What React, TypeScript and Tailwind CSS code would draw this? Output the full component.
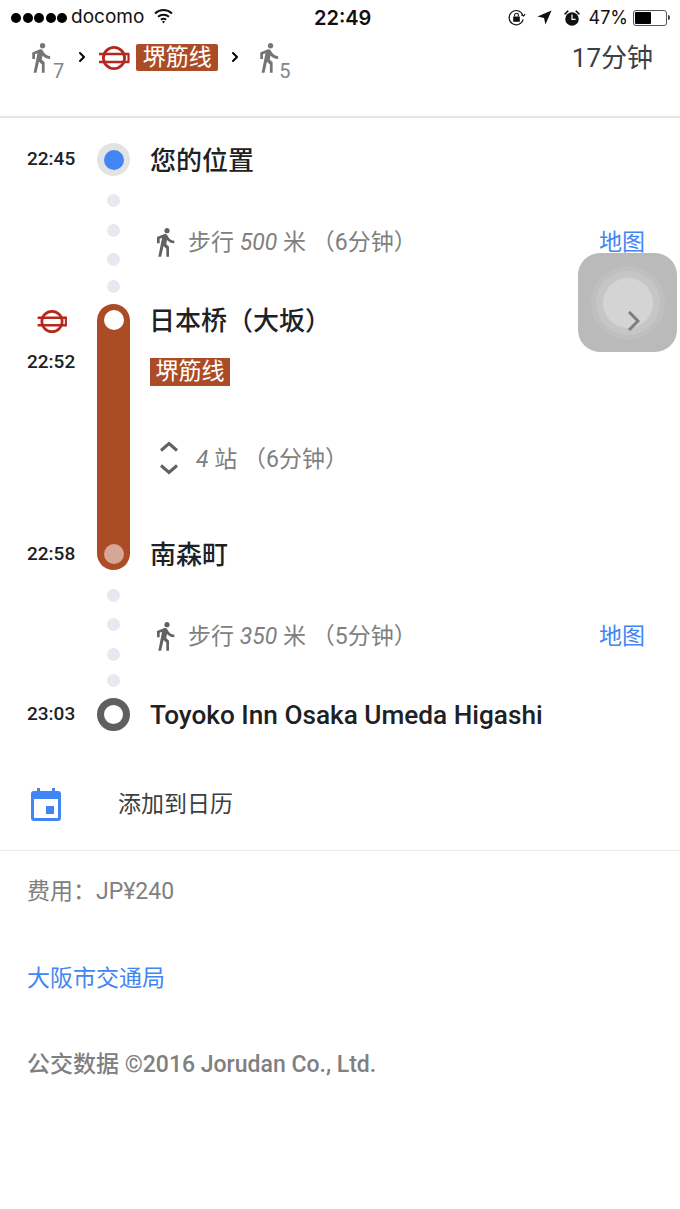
import React from "react";
import { ChevronRight } from "lucide-react";

const ROBOTO = "font-['Roboto','Noto_Sans_CJK_SC',sans-serif]";

function WalkIcon({ className }: { className: string }) {
  return (
    <svg viewBox="0 0 24 24" className={className} fill="currentColor">
      <path d="M13.5 5.5c1.1 0 2-.9 2-2s-.9-2-2-2-2 .9-2 2 .9 2 2 2zM9.8 8.9L7 23h2.1l1.8-8 2.1 2v6h2v-7.5l-2.1-2 .6-3C14.8 12 16.8 13 19 13v-2c-1.9 0-3.5-1-4.3-2.4l-1-1.6c-.4-.6-1-1-1.7-1-.3 0-.5.1-.8.1L6 8.3V13h2V9.6l1.8-.7" />
    </svg>
  );
}

function MetroIcon({ className }: { className: string }) {
  return (
    <svg viewBox="0 0 32 24" className={className} fill="none" stroke="#b5291c">
      <circle cx="16" cy="12" r="10.6" strokeWidth="2.8" />
      <path d="M1 8h30M1 16h30" strokeWidth="2.6" />
      <path d="M30.5 7v10" strokeWidth="2.2" />
    </svg>
  );
}

function Dots({ gaps }: { gaps: string[] }) {
  return (
    <div className="flex flex-col items-center">
      {gaps.map((g, i) => (
        <div key={i} className={`w-[13px] h-[13px] rounded-full bg-[#e6e9f0] ${g}`} />
      ))}
    </div>
  );
}

function WalkSegment({ dist, mins, dots }: { dist: string; mins: string; dots: string[] }) {
  return (
    <div className="flex h-[128px]">
      <div className="w-[97px]" />
      <div className="w-[33px]">
        <Dots gaps={dots} />
      </div>
      <div className="flex-1 flex items-center pl-[24px] pr-[35px] pt-[4px]">
        <WalkIcon className="w-[32px] h-[32px] text-[#616161] -ml-[5px]" />
        <span className="ml-[7px] pt-[2px] text-[23px] text-[#808080] whitespace-nowrap">
          步行 <em>{dist}</em> 米 {mins}
        </span>
        <span className="ml-auto pt-[2px] text-[23px] text-[#4285f4]">地图</span>
      </div>
    </div>
  );
}

export default function App() {
  return (
    <div className={`relative w-[680px] h-[1209px] bg-white overflow-hidden ${ROBOTO}`}>
      {/* status bar */}
      <div className="flex items-center h-[35px] pl-[11px] pr-[10px] text-[#111] font-['Inter',sans-serif] relative">
        <div className="flex gap-[1.5px]">
          {[0, 1, 2, 3, 4].map((i) => (
            <div key={i} className="w-[10px] h-[10px] rounded-full bg-black" />
          ))}
        </div>
        <span className="ml-[4px] text-[19px]">docomo</span>
        <svg viewBox="0 0 20 16" className="ml-[9px] w-[21px] h-[16px] -mt-[3px]" fill="none" stroke="#111" strokeWidth="2">
          <path d="M1.5 5.5c5-4.6 12-4.6 17 0M4.5 8.8c3.2-2.9 7.8-2.9 11 0M7.4 11.8c1.5-1.3 3.7-1.3 5.2 0" />
          <path d="M10 15.5l-1.6-1.9c1-.7 2.2-.7 3.2 0z" fill="#111" stroke="none" />
        </svg>
        <span className="absolute left-[314px] top-[6px] text-[20px] font-semibold leading-[24px]">22:49</span>
        <div className="ml-auto flex items-center">
          <svg viewBox="0 0 20 20" className="w-[19px] h-[19px]" fill="none" stroke="#111" strokeWidth="1.2">
            <path d="M16.5 7A7.5 7.5 0 1 0 17 12" />
            <path d="M15 7l2.5 1.5L19 6.5" />
            <rect x="6.5" y="9" width="7" height="5.5" fill="#111" stroke="none" />
            <path d="M8 9V7.5a2 2 0 0 1 4 0V9" />
          </svg>
          <svg viewBox="0 0 16 16" className="ml-[11px] w-[15px] h-[15px]" fill="#111">
            <path d="M15.5.5L9 15.5 7.5 8.5.5 7z" />
          </svg>
          <svg viewBox="0 0 20 20" className="ml-[11px] w-[18px] h-[18px]" fill="#111">
            <circle cx="10" cy="11" r="7.5" />
            <path d="M1 5.5L5 1.5l1.5 1L2.5 6.5zM19 5.5L15 1.5l-1.5 1 4 4z" />
            <path d="M10 6v5.5h4" stroke="#fff" strokeWidth="1.4" fill="none" />
          </svg>
          <span className="ml-[8px] text-[18px]">47%</span>
          <div className="ml-[5px] w-[34px] h-[16px] border border-[#555] rounded-[3px] p-[1px] flex">
            <div className="w-[16px] bg-black rounded-[1px]" />
          </div>
          <div className="w-[2px] h-[5px] bg-[#444] rounded-r-full ml-[1px]" />
        </div>
      </div>

      {/* route summary */}
      <div className="flex h-[83px] border-b-2 border-[#e6e6e6] pl-[24px] pr-[27px] pt-[7px]">
        <div className="flex items-start">
          <WalkIcon className="w-[33px] h-[33px] text-[#757575] -mt-[1px]" />
          <span className="text-[20px] text-[#80868b] mt-[17px] leading-[24px] -ml-[4px]">7</span>
          <ChevronRight className="w-[16px] h-[16px] ml-[10px] mt-[7px] text-black" strokeWidth={3} />
          <MetroIcon className="ml-[8px] mt-[4px] w-[32px] h-[24px]" />
          <span className="ml-[6px] mt-[2px] h-[27px] w-[82px] rounded-[2px] bg-[#ac4c26] text-white text-[23px] leading-[27px] text-center">堺筋线</span>
          <ChevronRight className="w-[16px] h-[16px] ml-[9px] mt-[7px] text-black" strokeWidth={3} />
          <WalkIcon className="w-[33px] h-[33px] text-[#757575] ml-[9px] -mt-[1px]" />
          <span className="text-[20px] text-[#80868b] mt-[17px] leading-[24px] -ml-[6px]">5</span>
        </div>
        <span className="ml-auto text-[26px] text-[#3c4043] leading-[32px]">17分钟</span>
      </div>

      {/* itinerary */}
      <div className="pt-[25px]">
        <div className="flex items-center h-[33px]">
          <span className="w-[97px] pl-[27px] text-[19px] font-medium text-[#202124]">22:45</span>
          <div className="w-[33px] h-[33px] rounded-full bg-[#e3e3e3] flex items-center justify-center">
            <div className="w-[20px] h-[20px] rounded-full bg-[#4285f4]" />
          </div>
          <span className="ml-[20px] pt-[3px] text-[26px] font-medium text-[#202124]">您的位置</span>
        </div>

        <WalkSegment dist="500" mins="（6分钟）" dots={["mt-[18px]", "mt-[17px]", "mt-[16px]", "mt-[14px]"]} />

        <div className="flex h-[266px]">
          <div className="w-[97px] pl-[27px]">
            <div className="flex flex-col items-start">
              <MetroIcon className="ml-[9px] mt-[6px] w-[32px] h-[23px]" />
              <span className="mt-[17px] text-[19px] font-medium text-[#202124] leading-[24px]">22:52</span>
              <span className="mt-[168px] text-[19px] font-medium text-[#202124] leading-[24px]">22:58</span>
            </div>
          </div>
          <div className="w-[33px] rounded-full bg-[#ac4c26] flex flex-col items-center justify-between pt-[6px] pb-[6px]">
            <div className="w-[20px] h-[20px] rounded-full bg-white" />
            <div className="w-[20px] h-[20px] rounded-full bg-[#d6a696]" />
          </div>
          <div className="pl-[20px] flex flex-col items-start">
            <span className="-ml-[1px] text-[26px] font-medium text-[#202124] leading-[34px] whitespace-nowrap">日本桥（大坂）</span>
            <span className="mt-[20px] w-[80px] h-[28px] bg-[#ac4c26] text-white text-[23px] leading-[28px] text-center">堺筋线</span>
            <div className="mt-[52px] flex items-center h-[40px]">
              <svg viewBox="0 0 20 34" className="w-[20px] h-[34px] ml-[9px]" fill="none" stroke="#616161" strokeWidth="3">
                <path d="M2 9.5l8-7 8 7M2 24.5l8 7 8-7" />
              </svg>
              <span className="ml-[17px] pt-[5px] text-[23px] text-[#808080] whitespace-nowrap">
                <em>4</em> 站 （6分钟）
              </span>
            </div>
            <span className="mt-[60px] text-[26px] font-medium text-[#202124] leading-[34px]">南森町</span>
          </div>
        </div>

        <WalkSegment dist="350" mins="（5分钟）" dots={["mt-[19px]", "mt-[16px]", "mt-[17px]", "mt-[13px]"]} />

        <div className="flex items-center h-[33px]">
          <span className="w-[97px] pl-[27px] text-[19px] font-medium text-[#202124]">23:03</span>
          <div className="w-[33px] h-[33px] rounded-full border-[7px] border-[#5f5f5f]" />
          <span className="ml-[20px] pt-[2px] text-[26.2px] font-medium text-[#202124] whitespace-nowrap">Toyoko Inn Osaka Umeda Higashi</span>
        </div>
      </div>

      {/* calendar */}
      <div className="mt-[44px] flex items-center h-[58px] pl-[31px] border-b border-[#ebebeb] box-content pb-[17px]">
        <svg viewBox="0 0 30 33" className="w-[30px] h-[33px]" fill="#4285f4">
          <path d="M6 0h3v3h12V0h3v3h3a3 3 0 0 1 3 3v24a3 3 0 0 1-3 3H3a3 3 0 0 1-3-3V6a3 3 0 0 1 3-3h3zM3 11v19h24V11z" fillRule="evenodd" />
          <rect x="15" y="18" width="8" height="8" />
        </svg>
        <span className="ml-[57px] pt-[2px] text-[23px] text-[#3c4043]">添加到日历</span>
      </div>

      {/* footer */}
      <div className="pl-[27px] text-[23px] flex flex-col items-start">
        <span className="mt-[25px] leading-[32px] text-[#808080]">费用：JP¥240</span>
        <span className="mt-[55px] leading-[32px] text-[#4285f4]">大阪市交通局</span>
        <span className="mt-[54px] leading-[32px] font-medium text-[#808080]">公交数据 ©2016 Jorudan Co., Ltd.</span>
      </div>

      {/* floating assistive touch */}
      <div className="absolute left-[578px] top-[253px] w-[99px] h-[99px] rounded-[22px] bg-[#bababa] flex items-center justify-center">
        <div className="w-[74px] h-[74px] rounded-full bg-[#bfbfbf] flex items-center justify-center">
          <div className="w-[64px] h-[64px] rounded-full bg-[#c6c6c6] flex items-center justify-center">
            <div className="w-[50px] h-[50px] rounded-full bg-[#d4d4d4]" />
          </div>
        </div>
        <svg viewBox="0 0 12 20" className="absolute left-[50px] top-[58px] w-[12px] h-[20px]" fill="none" stroke="#7d7d7d" strokeWidth="3">
          <path d="M1 1l9 9-9 9" />
        </svg>
      </div>
    </div>
  );
}
